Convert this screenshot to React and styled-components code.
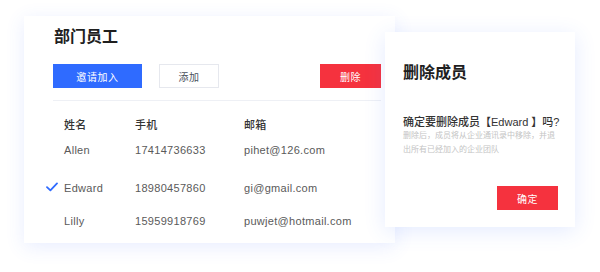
import React from "react";
import styled, { createGlobalStyle } from "styled-components";

const GlobalStyle = createGlobalStyle`
  body {
    margin: 0;
    background: #ffffff;
    font-family: "Liberation Sans", "Noto Sans CJK SC", sans-serif;
  }
`;

const Page = styled.div`
  display: flex;
  align-items: flex-start;
  width: 600px;
  height: 272px;
  padding: 16px 0 0 24px;
  box-sizing: border-box;
  overflow: hidden;
`;

const Card = styled.div`
  width: 371px;
  height: 227px;
  flex-shrink: 0;
  box-sizing: border-box;
  padding: 9px 14px 0 29px;
  background: #ffffff;
  box-shadow: 0 4px 18px rgba(64, 110, 255, 0.12);
`;

const Title = styled.h2`
  margin: 0 0 0 1px;
  font-size: 16px;
  line-height: 24px;
  font-weight: 700;
  color: #1f1f1f;
`;

const Toolbar = styled.div`
  display: flex;
  gap: 17px;
  margin-top: 15px;
`;

const Button = styled.button`
  height: 24px;
  width: ${(p) => p.$w}px;
  margin-left: ${(p) => (p.$push ? "auto" : "0")};
  padding: 0;
  border: 1px solid
    ${(p) =>
      p.$kind === "primary" ? "#2f6bff" : p.$kind === "danger" ? "#f5323e" : "#e6e8ee"};
  background: ${(p) =>
    p.$kind === "primary" ? "#2f6bff" : p.$kind === "danger" ? "#f5323e" : "#ffffff"};
  color: ${(p) => (p.$kind ? "#ffffff" : "#4a4f5c")};
  font-family: inherit;
  font-size: 10px;
  letter-spacing: 0.6px;
  cursor: pointer;
`;

const Divider = styled.div`
  height: 1px;
  margin-top: 12px;
  background: #eef0f5;
`;

const Table = styled.div`
  margin-left: -7px;
  margin-top: 10px;
`;

const Row = styled.div`
  display: grid;
  grid-template-columns: 18px 71px 109px 1fr;
  align-items: center;
  height: 26px;
  margin-top: ${(p) => p.$gap || 0}px;
  font-size: 11px;
  letter-spacing: 0.3px;
  color: ${(p) => (p.$head ? "#333333" : "#5a5a5a")};
  font-weight: ${(p) => (p.$head ? 500 : 400)};
`;

const Check = styled.svg`
  width: 12px;
  height: 10px;
`;

const Dialog = styled.div`
  position: relative;
  z-index: 1;
  width: 190px;
  height: 195px;
  flex-shrink: 0;
  box-sizing: border-box;
  margin: 16px 0 0 -10px;
  padding: 30px 17px 0 18px;
  display: flex;
  flex-direction: column;
  background: #ffffff;
  box-shadow: 0 4px 20px rgba(64, 110, 255, 0.14);
`;

const DialogTitle = styled.h3`
  margin: 0;
  font-size: 16px;
  line-height: 22px;
  font-weight: 700;
  color: #1f1f1f;
`;

const Question = styled.p`
  margin: 31px 0 0;
  font-size: 11px;
  line-height: 14px;
  font-weight: 500;
  letter-spacing: 0;
  color: #333333;
  white-space: nowrap;
`;

const Note = styled.p`
  margin: 0;
  font-size: 8px;
  line-height: 14px;
  color: #c4c4c4;
`;

const DialogFooter = styled.div`
  display: flex;
  justify-content: flex-end;
  margin-top: 29px;
`;

const members = [
  { name: "Allen", phone: "17414736633", email: "pihet@126.com", gap: 0 },
  { name: "Edward", phone: "18980457860", email: "gi@gmail.com", gap: 12, checked: true },
  { name: "Lilly", phone: "15959918769", email: "puwjet@hotmail.com", gap: 7 },
];

export default function App() {
  return (
    <>
      <GlobalStyle />
      <Page>
        <Card>
          <Title>部门员工</Title>
          <Toolbar>
            <Button $kind="primary" $w={89}>邀请加入</Button>
            <Button $w={60}>添加</Button>
            <Button $kind="danger" $w={61} $push>删除</Button>
          </Toolbar>
          <Divider />
          <Table>
            <Row $head>
              <span />
              <span>姓名</span>
              <span>手机</span>
              <span>邮箱</span>
            </Row>
            {members.map((m) => (
              <Row key={m.name} $gap={m.gap}>
                <span>
                  {m.checked && (
                    <Check viewBox="0 0 12 10">
                      <path
                        d="M1 5.2 L4.4 8.4 L11 1.4"
                        fill="none"
                        stroke="#2f6bff"
                        strokeWidth="1.8"
                        strokeLinecap="round"
                        strokeLinejoin="round"
                      />
                    </Check>
                  )}
                </span>
                <span>{m.name}</span>
                <span>{m.phone}</span>
                <span>{m.email}</span>
              </Row>
            ))}
          </Table>
        </Card>
        <Dialog>
          <DialogTitle>删除成员</DialogTitle>
          <Question>确定要删除成员【Edward 】吗?</Question>
          <Note>删除后，成员将从企业通讯录中移除，并退出所有已经加入的企业团队</Note>
          <DialogFooter>
            <Button $kind="danger" $w={61}>确定</Button>
          </DialogFooter>
        </Dialog>
      </Page>
    </>
  );
}
